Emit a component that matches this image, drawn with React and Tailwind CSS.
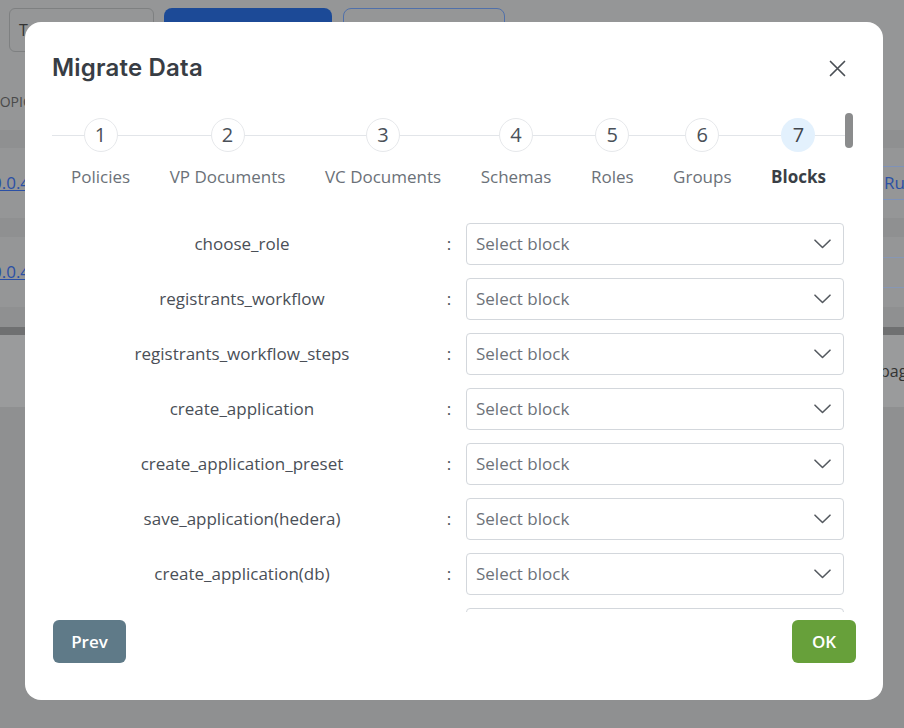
const steps = ["Policies", "VP Documents", "VC Documents", "Schemas", "Roles", "Groups", "Blocks"];
const blocks = [
  "choose_role",
  "registrants_workflow",
  "registrants_workflow_steps",
  "create_application",
  "create_application_preset",
  "save_application(hedera)",
  "create_application(db)",
  "sign_application",
];

function Chevron() {
  return (
    <svg width="17" height="10" viewBox="0 0 17 10" fill="none">
      <path d="M1 1.2l7.5 7.3 7.5-7.3" stroke="#555a60" strokeWidth="1.6" strokeLinecap="round" strokeLinejoin="round" />
    </svg>
  );
}

function CloseIcon() {
  return (
    <svg width="17" height="17" viewBox="0 0 17 17" fill="none">
      <path d="M1.5 1.5l14 14M15.5 1.5l-14 14" stroke="#4a4f55" strokeWidth="1.7" strokeLinecap="round" />
    </svg>
  );
}

function Background() {
  return (
    <div className="flex flex-col font-['Open_Sans',sans-serif]">
      <div className="flex gap-[10px] pl-[9px] pt-[8px]">
        <div className="h-[44px] w-[145px] rounded-[6px] border border-[#7e8081] pl-[9px] text-[16px] leading-[42px] text-[#333]">T</div>
        <div className="h-[44px] w-[168px] rounded-[8px] bg-[#1c4a97]" />
        <div className="ml-[1px] h-[44px] w-[162px] rounded-[8px] border border-[#5070aa]" />
      </div>
      <div className="mt-[37px] h-[26px] w-[25px] overflow-hidden whitespace-nowrap text-[14px] leading-[26px] text-[#4a4a4a]">
        <span className="-ml-[8px]">TOPIC</span>
      </div>
      <div className="mt-[15px] h-[18px] bg-[#8f9091]" />
      <div className="flex h-[70px] items-center justify-between">
        <span className="-ml-[8px] text-[17px] text-[#2b50a5] underline">0.0.4</span>
        <span className="flex h-[34px] w-[21px] items-center overflow-hidden whitespace-nowrap border-y border-[#7f92b8] pl-[1px] text-[17px] text-[#2b50a5]">Run</span>
      </div>
      <div className="h-[19px] bg-[#8f9091]" />
      <div className="flex h-[70px] items-center justify-between">
        <span className="-ml-[8px] text-[17px] text-[#2b50a5] underline">0.0.4</span>
        <span className="h-[31px] w-[21px] border-y border-[#8797b5]" />
      </div>
      <div className="h-[20px] bg-[#8f9091]" />
      <div className="h-[8px] bg-[#6f7071]" />
      <div className="flex h-[72px] items-center justify-end bg-[#9a9b9c]">
        <span className="w-[24px] overflow-hidden whitespace-nowrap text-[16px] text-[#333]">bage</span>
      </div>
      <div className="h-[330px] bg-[#8f9091]" />
    </div>
  );
}

export default function App() {
  return (
    <div className="relative h-[728px] w-[904px] overflow-hidden bg-[#959697]">
      <Background />
      <div className="absolute left-[25px] top-[22px] flex h-[678px] w-[858px] flex-col rounded-[16px] bg-white font-['Open_Sans',sans-serif]">
        <div className="mt-[30px] flex h-[32px] items-center justify-between pl-[27px] pr-[37px]">
          <h2 className="font-['Inter',sans-serif] text-[24px] font-semibold tracking-[0.2px] text-[#383d44]">Migrate Data</h2>
          <CloseIcon />
        </div>
        <div className="relative ml-[27px] mt-[26px] h-[502px] w-[803px] overflow-hidden">
          <div className="w-[793px]">
            <div className="relative flex justify-between pt-[8px]">
              <div className="absolute left-0 right-0 top-[25px] h-px bg-[#e2e5e9]" />
              {steps.map((s, i) => {
                const active = i === steps.length - 1;
                return (
                  <div key={s} className="relative flex flex-col items-center px-[19px]">
                    {active ? (
                      <div className="flex h-[34px] w-[34px] items-center justify-center rounded-full bg-[#e3f1fd] text-[20px] text-[#3f454c]">{i + 1}</div>
                    ) : (
                      <div className="flex h-[34px] w-[34px] items-center justify-center rounded-full border border-[#e6e8eb] bg-white text-[20px] text-[#4a5058]">{i + 1}</div>
                    )}
                    {active ? (
                      <div className="mt-[13px] whitespace-nowrap text-[17px] font-bold leading-[24px] text-[#3a3f46]">{s}</div>
                    ) : (
                      <div className="mt-[13px] whitespace-nowrap text-[17px] leading-[24px] text-[#6b7178]">{s}</div>
                    )}
                  </div>
                );
              })}
            </div>
            <div className="mt-[34px] grid grid-cols-[380px_34px_378px] gap-y-[13px]">
              {blocks.map((b) => (
                <div key={b} className="contents">
                  <div className="flex h-[42px] items-center justify-center text-[17px] text-[#4a4f57]">{b}</div>
                  <div className="flex h-[42px] items-center justify-center text-[17px] text-[#4a4f57]">:</div>
                  <div className="flex h-[42px] items-center justify-between rounded-[4px] border border-[#d3d7dc] pl-[9px] pr-[12px] text-[17px] text-[#6d7279]">
                    <span>Select block</span>
                    <Chevron />
                  </div>
                </div>
              ))}
            </div>
          </div>
          <div className="absolute right-[2px] top-[3px] h-[35px] w-[8px] rounded-full bg-[#8b8c8d]" />
        </div>
        <div className="mt-[8px] flex items-center justify-between pl-[28px] pr-[27px]">
          <button className="h-[43px] w-[73px] rounded-[6px] bg-[#5f7a88] text-[17px] font-semibold text-white">Prev</button>
          <button className="h-[43px] w-[64px] rounded-[6px] bg-[#67a03a] text-[17px] font-semibold text-white">OK</button>
        </div>
      </div>
    </div>
  );
}
